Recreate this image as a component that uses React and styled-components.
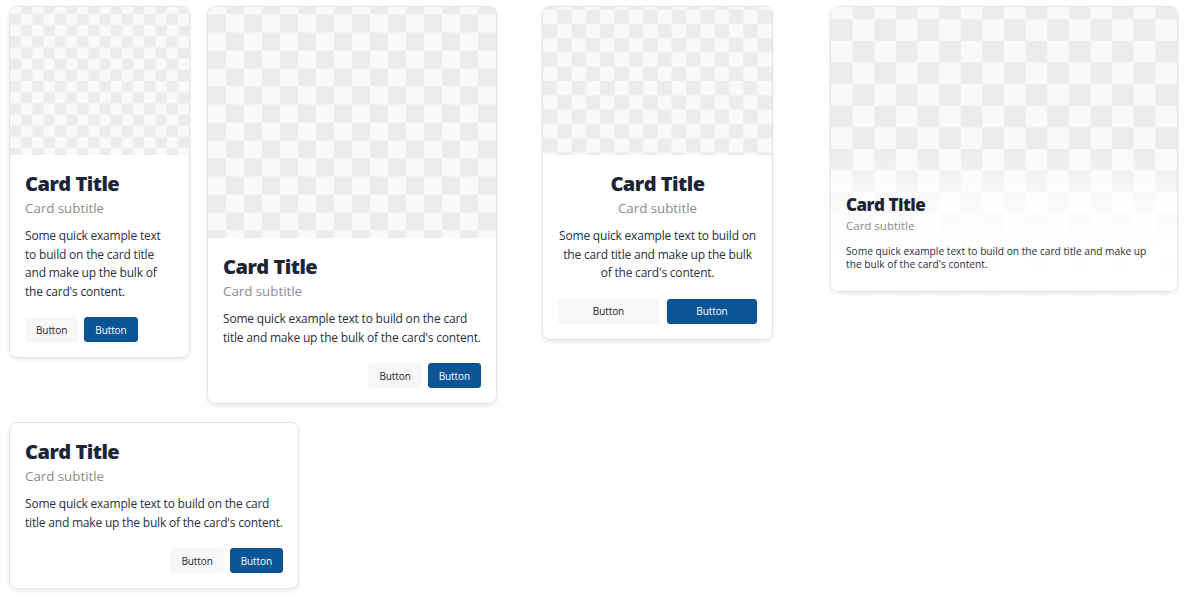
import React, { useId } from "react";
import styled, { createGlobalStyle, css } from "styled-components";

const GlobalStyle = createGlobalStyle`
  html, body {
    margin: 0;
    padding: 0;
    background: #ffffff;
  }
  body {
    font-family: "Open Sans", "Noto Sans", "Liberation Sans", sans-serif;
    color: #27303f;
    -webkit-font-smoothing: antialiased;
  }
  * { box-sizing: border-box; }
`;

const Page = styled.main`
  padding: 6px 9px;
  display: flex;
  flex-direction: column;
  gap: 18px;
`;

const Row = styled.div`
  display: flex;
  align-items: flex-start;
`;

const Card = styled.article`
  width: ${(p) => p.$width}px;
  margin-left: ${(p) => p.$offset || 0}px;
  flex: none;
  background: #ffffff;
  border: 1px solid #e4e4e4;
  border-radius: 8px;
  box-shadow: 0 2px 4px rgba(20, 30, 45, 0.09);
  overflow: hidden;
  display: ${(p) => (p.$overlay ? "grid" : "flex")};
  flex-direction: column;
`;

const Media = styled.div`
  height: ${(p) => p.$height}px;
  grid-area: 1 / 1;
  svg {
    display: block;
    width: 100%;
    height: 100%;
  }
`;

const Body = styled.div`
  padding: 15px 15px 15px;
  text-align: ${(p) => p.$align || "left"};
  ${(p) =>
    p.$overlay &&
    css`
      grid-area: 1 / 1;
      align-self: stretch;
      display: flex;
      flex-direction: column;
      justify-content: flex-end;
      padding: 15px 15px 20px;
      background: linear-gradient(
        180deg,
        rgba(255, 255, 255, 0) 50%,
        rgba(255, 255, 255, 0.72) 68%,
        rgba(255, 255, 255, 0.93) 84%,
        #ffffff 100%
      );
    `}
`;

const Title = styled.h3`
  margin: 0;
  font-weight: 800;
  color: #1b2536;
  font-size: ${(p) => (p.$compact ? 17 : 20)}px;
  line-height: ${(p) => (p.$compact ? 24 : 28)}px;
  letter-spacing: -0.5px;
`;

const Subtitle = styled.h4`
  margin: 0;
  font-weight: 400;
  color: #8b8b8b;
  font-size: ${(p) => (p.$compact ? 11.5 : 13.3)}px;
  line-height: ${(p) => (p.$compact ? 18 : 20)}px;
`;

const Copy = styled.p`
  margin: ${(p) => (p.$compact ? "10px 0 0" : "9px 0 0")};
  font-size: ${(p) => (p.$compact ? 10.2 : 12)}px;
  line-height: ${(p) => (p.$compact ? 13 : 18.6)}px;
  letter-spacing: ${(p) => (p.$compact ? 0 : -0.2)}px;
  color: #27303f;
`;

const Line = styled.span`
  display: block;
  white-space: nowrap;
`;

const Actions = styled.div`
  margin-top: 16px;
  display: ${(p) => (p.$layout === "fill" ? "grid" : "flex")};
  grid-template-columns: 101fr 90fr;
  justify-content: ${(p) => (p.$layout === "end" ? "flex-end" : "flex-start")};
  gap: ${(p) => (p.$layout === "fill" ? 8 : 6)}px;
`;

const Button = styled.button`
  height: 25px;
  padding: 0 10px;
  border-radius: 3px;
  font-family: inherit;
  font-size: 10px;
  letter-spacing: -0.1px;
  cursor: pointer;
  ${(p) =>
    p.$primary
      ? css`
          background: #0b5597;
          color: #ffffff;
          border: 1px solid #0a4f8d;
        `
      : css`
          background: #f7f7f7;
          color: #1f1f1f;
          border: 1px solid #f7f7f7;
        `}
`;

function Checker() {
  const id = useId().replace(/:/g, "");
  return (
    <svg viewBox="0 0 16 16" preserveAspectRatio="xMidYMid slice" aria-hidden="true">
      <defs>
        <pattern id={id} width="2" height="2" patternUnits="userSpaceOnUse">
          <rect width="2" height="2" fill="#f9f9f9" />
          <rect width="1" height="1" fill="#ebebeb" />
          <rect x="1" y="1" width="1" height="1" fill="#ebebeb" />
        </pattern>
      </defs>
      <rect width="16" height="16" fill={`url(#${id})`} />
    </svg>
  );
}

const cards = {
  narrow: [
    "Some quick example text",
    "to build on the card title",
    "and make up the bulk of",
    "the card's content.",
  ],
  wide: [
    "Some quick example text to build on the card",
    "title and make up the bulk of the card's content.",
  ],
  centered: [
    "Some quick example text to build on",
    "the card title and make up the bulk",
    "of the card's content.",
  ],
  overlay: [
    "Some quick example text to build on the card title and make up",
    "the bulk of the card's content.",
  ],
};

function CardText({ lines, compact }) {
  return (
    <>
      <Title $compact={compact}>Card Title</Title>
      <Subtitle $compact={compact}>Card subtitle</Subtitle>
      <Copy $compact={compact}>
        {lines.map((l) => (
          <Line key={l}>{l}</Line>
        ))}
      </Copy>
    </>
  );
}

function Buttons({ layout }) {
  return (
    <Actions $layout={layout}>
      <Button>Button</Button>
      <Button $primary>Button</Button>
    </Actions>
  );
}

export default function App() {
  return (
    <>
      <GlobalStyle />
      <Page>
        <Row>
          <Card $width={181}>
            <Media $height={148}>
              <Checker />
            </Media>
            <Body>
              <CardText lines={cards.narrow} />
              <Buttons layout="start" />
            </Body>
          </Card>

          <Card $width={290} $offset={17}>
            <Media $height={231}>
              <Checker />
            </Media>
            <Body>
              <CardText lines={cards.wide} />
              <Buttons layout="end" />
            </Body>
          </Card>

          <Card $width={231} $offset={45}>
            <Media $height={148}>
              <Checker />
            </Media>
            <Body $align="center">
              <CardText lines={cards.centered} />
              <Buttons layout="fill" />
            </Body>
          </Card>

          <Card $width={348} $offset={57} $overlay>
            <Media $height={284}>
              <Checker />
            </Media>
            <Body $overlay>
              <CardText lines={cards.overlay} compact />
            </Body>
          </Card>
        </Row>

        <Row>
          <Card $width={290}>
            <Body>
              <CardText lines={cards.wide} />
              <Buttons layout="end" />
            </Body>
          </Card>
        </Row>
      </Page>
    </>
  );
}
